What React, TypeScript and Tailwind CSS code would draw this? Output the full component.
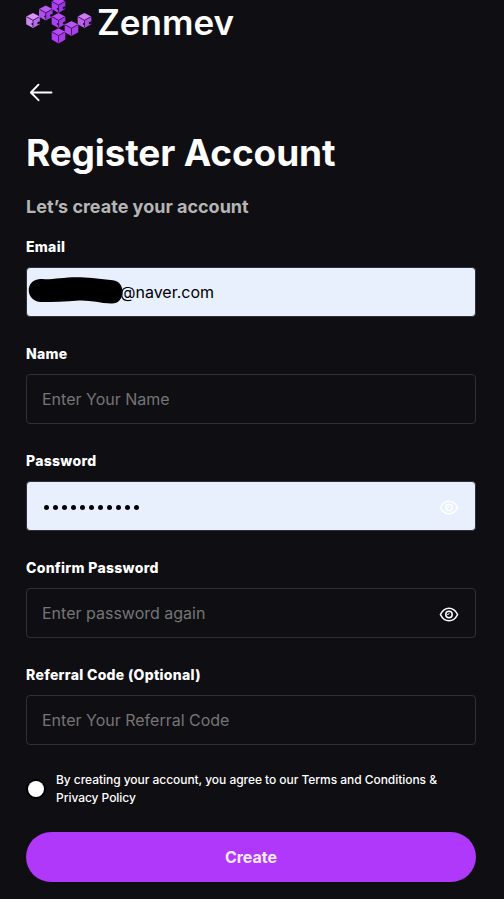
import React from "react";

const cubes = [
  { x: 7, y: 20.5, top: "#d992fa", left: "#cf86f5", right: "#b968ea", notch: true },
  { x: 19.8, y: 13, top: "#b95bf0", left: "#b04ef0", right: "#9c3fe0", notch: true },
  { x: 32.5, y: 5.3, top: "#b545f5", left: "#ac3cf5", right: "#9a33e2", notch: true },
  { x: 32.5, y: 20.5, top: "#b64cf2", left: "#ad3ff2", right: "#a03ae2", notch: true },
  { x: 32.5, y: 35.8, top: "#b848f6", left: "#b03cf5", right: "#aa39ee", notch: false },
  { x: 45.5, y: 28.5, top: "#b853f0", left: "#b044ee", right: "#a741e5", notch: false },
  { x: 58.5, y: 20.5, top: "#cf7bf6", left: "#bd60ef", right: "#ac50e0", notch: true },
];

function Logo() {
  return (
    <svg width="66" height="44" viewBox="0 0 66 44" className="shrink-0">
      {cubes.map((c, i) => (
        <g key={i} transform={`translate(${c.x} ${c.y})`}>
          <path d="M0-7.6 6.8-4 0-.2-6.8-4Z" fill={c.top} />
          <path d="M-6.8-4 0-.2V7.6L-6.8 3.8Z" fill={c.left} />
          <path d="M6.8-4 0-.2V7.6L6.8 3.8Z" fill={c.right} />
          <path d="M-6.3-3.7 0-.2 6.3-3.7M0-.2V6.5" fill="none" stroke="#3d1757" strokeWidth=".9" />
          {c.notch && <path d="M-1.6 2.7H0V4.6L-1.6 3.9ZM4.2 2.2Q5.5.8 7 1.2V3L4.8 4Z" fill="#0f0e13" />}
        </g>
      ))}
    </svg>
  );
}

function Eye() {
  return (
    <svg width="20" height="20" viewBox="0 0 20 20" fill="none" stroke="#fff" className="absolute top-[15px] right-4">
      <path d="M1.4 10.5C3.3 6.6 6.3 4.2 10 4.2S16.7 6.6 18.6 10.5C16.7 14.4 13.7 16.8 10 16.8S3.3 14.4 1.4 10.5Z" strokeWidth="1.6" strokeLinejoin="round" />
      <circle cx="10" cy="10.5" r="3.2" strokeWidth="1.5" />
      <path d="M10 8.7A1.4 1.4 0 0 1 8.2 10.5" strokeWidth="1" />
    </svg>
  );
}

type FieldProps = {
  label: string;
  placeholder?: string;
  filled?: boolean;
  children?: React.ReactNode;
};

function Field({ label, placeholder, filled, children }: FieldProps) {
  return (
    <div className="mb-[28px]">
      <div className="mb-[12px] h-[17px] text-[14px] leading-[17px] font-extrabold tracking-[0.3px] text-white">{label}</div>
      <div className={`relative flex h-[50px] items-center rounded-[4px] border border-[#302f39] px-[15px] text-[16px] ${filled ? "bg-[#e8f0fe] text-black" : "text-[#757575]"}`}>
        {placeholder}
        {children}
      </div>
    </div>
  );
}

export default function App() {
  return (
    <main className="h-[899px] overflow-hidden bg-[#0f0e13] pr-[28px] pl-[26px] font-['Inter',sans-serif]">
      <header className="flex h-[44px]">
        <Logo />
        <span className="ml-[5px] text-[35px] leading-[44px] font-semibold text-white">Zenmev</span>
      </header>
      <svg width="24" height="20" viewBox="0 0 24 20" fill="none" stroke="#fff" strokeWidth="1.9" strokeLinecap="round" strokeLinejoin="round" className="mt-[38px] ml-[3px]">
        <path d="M22.5 10.5H2M9.5 2.7 1.9 10.5 9.5 18.2" />
      </svg>
      <h1 className="mt-[28px] h-[45px] text-[37px] leading-[45px] font-bold tracking-[-0.15px] text-white">Register Account</h1>
      <p className="mt-[20px] h-[24px] text-[18px] leading-[24px] font-bold text-[#b5b5b5]">Let’s create your account</p>
      <form className="mt-[19px]">
        <Field label="Email" filled>
          <span className="ml-[78px]">@naver.com</span>
          <svg width="98" height="30" viewBox="0 0 98 30" className="absolute top-[8px] left-[1px]">
            <path d="M12 3C27 4 38 0 57 1.5 67 2 75 3.5 85 4.2 91 4.7 94.5 9.5 94.5 16 94.5 23 90 28 83 27.5 72 27 62 24 51 24.5 38 26 24 26 12 26-3 24-3 4 12 3Z" fill="#000" />
          </svg>
        </Field>
        <Field label="Name" placeholder="Enter Your Name" />
        <Field label="Password" filled>
          <div className="mt-[2px] flex gap-[4px] pl-[2px]">
            {Array.from({ length: 11 }, (_, i) => (
              <i key={i} className="size-[5px] rounded-full bg-black" />
            ))}
          </div>
          <Eye />
        </Field>
        <Field label="Confirm Password" placeholder="Enter password again">
          <Eye />
        </Field>
        <Field label="Referral Code (Optional)" placeholder="Enter Your Referral Code" />
        <div className="-mt-[2px] flex h-[36px] items-center">
          <span className="ml-[2px] size-4 shrink-0 rounded-full bg-white ring-2 ring-black" />
          <p className="ml-[12px] text-[12px] leading-[18px] font-medium tracking-[-0.045px] whitespace-nowrap text-white">
            By creating your account, you agree to our Terms and Conditions &amp;
            <br />
            Privacy Policy
          </p>
        </div>
        <button type="button" className="mt-[25px] h-[50px] w-[450px] rounded-full bg-[#b038fa] text-[16px] font-bold text-[#fbeaff]">
          Create
        </button>
      </form>
    </main>
  );
}
